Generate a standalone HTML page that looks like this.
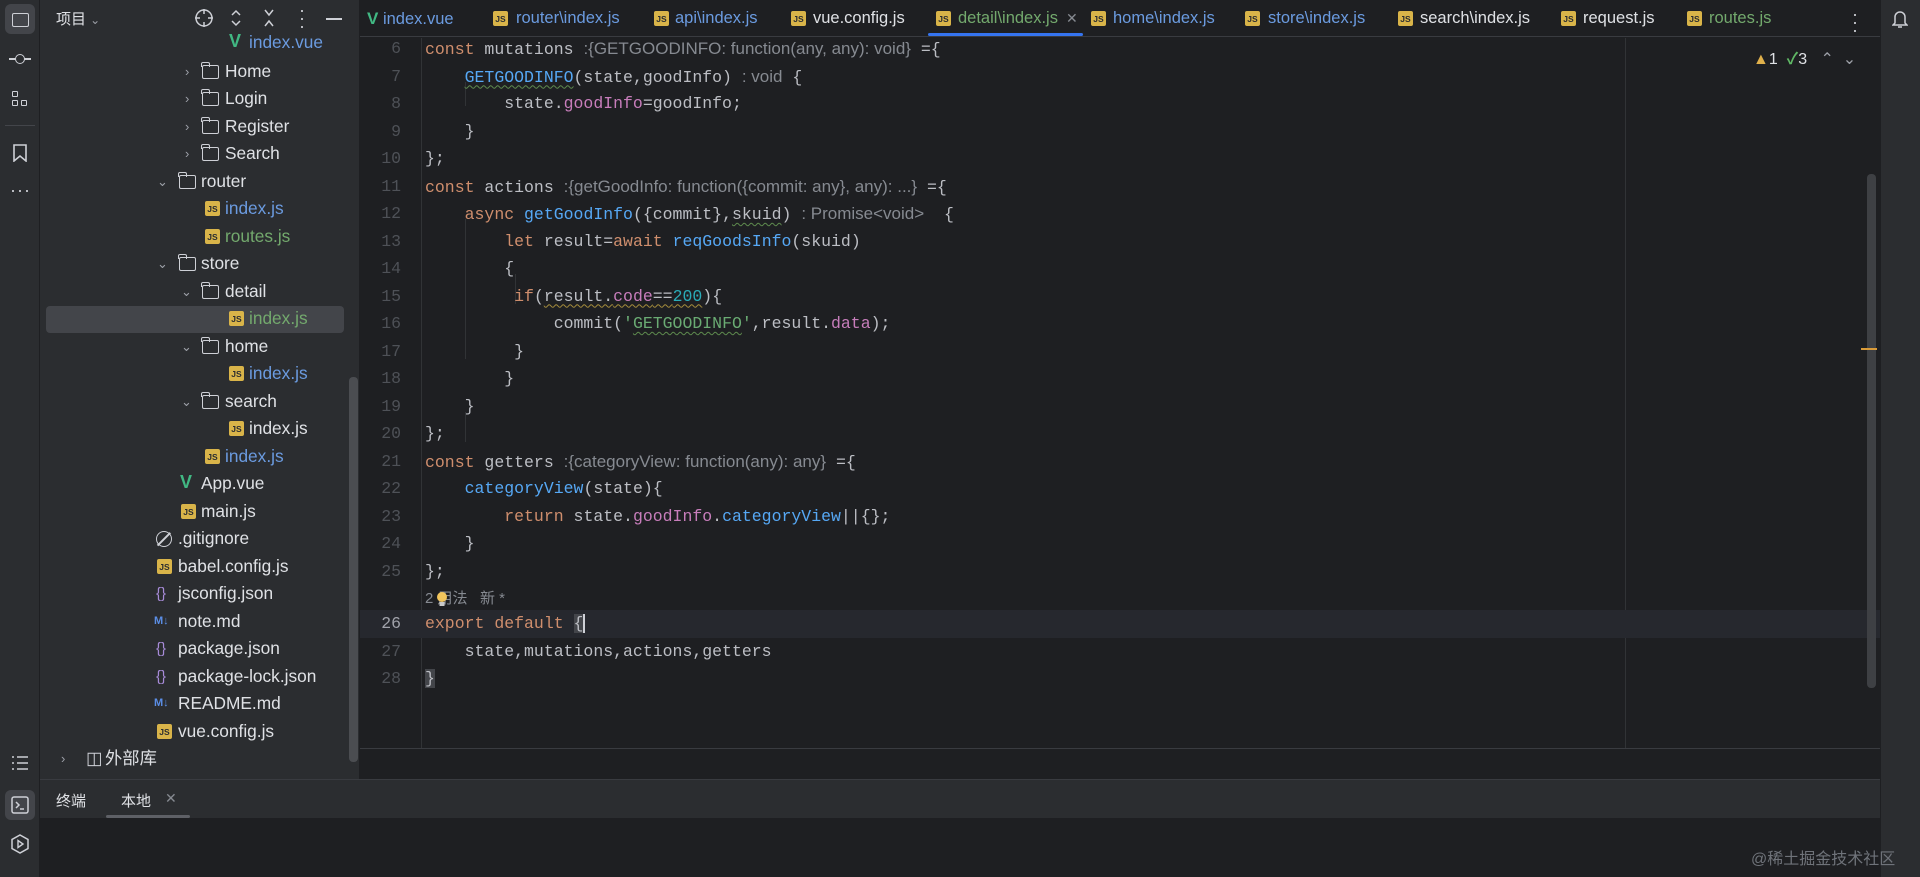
<!DOCTYPE html>
<html><head><meta charset="utf-8">
<style>
*{margin:0;padding:0;box-sizing:border-box}
body{width:1920px;height:877px;overflow:hidden;background:#1e1f22;font-family:"Liberation Sans","Noto Sans CJK SC",sans-serif;color:#dfe1e5;position:relative}
.abs{position:absolute}
#act{left:0;top:0;width:40px;height:877px;background:#2b2d30;border-right:1px solid #1e1f22}
#proj{left:40px;top:0;width:320px;height:779px;background:#2b2d30;border-right:1px solid #1e1f22;overflow:hidden}
.row{position:absolute;height:27px;line-height:27px;font-size:17.3px;white-space:nowrap}
.chev{position:absolute;font-size:13px;color:#9da0a8}
.js{position:absolute;width:15px;height:15px;background:#d9b449;border-radius:2px;color:#2b2d30;font-size:8.5px;font-weight:bold;line-height:17px;text-align:center;font-family:"Liberation Sans",sans-serif}
.fold{position:absolute;width:17px;height:14px;border:1.6px solid #ced0d6;border-radius:2px}
.fold:before{content:"";position:absolute;left:-1.6px;top:-4px;width:7px;height:4px;border:1.6px solid #ced0d6;border-bottom:none;border-radius:2px 2px 0 0}
.vue{position:absolute;color:#41b883;font-weight:bold;font-size:18px}
.blue{color:#6b9be0}.green{color:#73a96d}
#tabs{left:360px;top:0;width:1520px;height:37px;background:#1e1f22;border-bottom:1px solid #393b40}
.tab{position:absolute;top:0;height:37px;line-height:37px;font-size:16.5px;white-space:nowrap}
#code{left:360px;top:38px;width:1520px;height:710px;overflow:hidden;background:#1e1f22}
.ln{position:absolute;left:0;width:1520px;height:27.5px;line-height:27.5px;font-family:"Liberation Mono",monospace;font-size:16.5px;color:#bcbec4;white-space:pre}
.num{position:absolute;left:0;width:41px;text-align:right;color:#4e5157}
.txt{position:absolute;left:65px}
.k{color:#cf8e6d}.f{color:#56a8f5}.p{color:#c77dbb}.n{color:#2aacb8}.s{color:#6aab73}
.h{font-family:"Liberation Sans","Noto Sans CJK SC",sans-serif;font-size:17px;color:#868a91}
.w{text-decoration:underline wavy #5e8b4e;text-decoration-thickness:1px;text-underline-offset:3px}
.wy{text-decoration:underline wavy #a58d3c;text-decoration-thickness:1px;text-underline-offset:3px}
.g{position:absolute;width:1px;background:#313336}
</style></head><body>

<div id="act" class="abs">
  <div class="abs" style="left:5px;top:4px;width:30px;height:30px;background:#43454a;border-radius:6px"></div>
  <div class="abs" style="left:12px;top:13px;width:17px;height:14px;border:1.6px solid #ced0d6;border-radius:2px"></div>
  <div class="abs" style="left:9px;top:58px;width:22px;height:1.5px;background:#ced0d6"></div>
  <div class="abs" style="left:15px;top:54px;width:10px;height:10px;border:1.6px solid #ced0d6;border-radius:50%;background:#2b2d30"></div>
  <div class="abs" style="left:12px;top:91px;width:6px;height:6px;border:1.5px solid #ced0d6;border-radius:1px"></div>
  <div class="abs" style="left:12px;top:100px;width:6px;height:6px;border:1.5px solid #ced0d6;border-radius:1px"></div>
  <div class="abs" style="left:21px;top:100px;width:6px;height:6px;border:1.5px solid #ced0d6;border-radius:1px"></div>
  <div class="abs" style="left:5px;top:125px;width:30px;height:1px;background:#43454a"></div>
  <svg class="abs" style="left:12px;top:144px" width="16" height="18"><path d="M2 1h12v16l-6-5-6 5z" fill="none" stroke="#ced0d6" stroke-width="1.6"/></svg>
  <div class="abs" style="left:10px;top:180px;font-size:18px;color:#ced0d6;letter-spacing:1px">···</div>
  <svg class="abs" style="left:11px;top:755px" width="18" height="16"><path d="M1 2h2M6 2h11M1 8h2M6 8h11M1 14h2M6 14h11" stroke="#ced0d6" stroke-width="1.6"/></svg>
  <div class="abs" style="left:5px;top:790px;width:30px;height:30px;background:#43454a;border-radius:6px"></div>
  <svg class="abs" style="left:11px;top:796px" width="18" height="18"><rect x="1" y="1" width="16" height="16" rx="2" fill="none" stroke="#ced0d6" stroke-width="1.5"/><path d="M5 6l3 3-3 3M9 13h4" fill="none" stroke="#ced0d6" stroke-width="1.5"/></svg>
  <svg class="abs" style="left:10px;top:834px" width="20" height="20"><path d="M10 1l8 4.5v9L10 19l-8-4.5v-9z" fill="none" stroke="#ced0d6" stroke-width="1.5"/><path d="M8 6.5v7l5-3.5z" fill="none" stroke="#ced0d6" stroke-width="1.4"/></svg>
</div>

<div id="proj" class="abs">
  <div class="abs" style="left:16px;top:8px;font-size:15px;color:#dfe1e5">项目 <span style="font-size:12px;color:#9da0a8">&#8964;</span></div>
  <svg class="abs" style="left:154px;top:8px" width="20" height="20"><circle cx="10" cy="10" r="8" fill="none" stroke="#ced0d6" stroke-width="1.5"/><path d="M10 1v5M10 14v5M1 10h5M14 10h5" stroke="#ced0d6" stroke-width="1.5"/></svg>
  <svg class="abs" style="left:190px;top:8px" width="12" height="20"><path d="M2 7l4-4 4 4M2 13l4 4 4-4" fill="none" stroke="#ced0d6" stroke-width="1.5"/></svg>
  <svg class="abs" style="left:223px;top:8px" width="12" height="20"><path d="M2 2l4 5 4-5M2 18l4-5 4 5" fill="none" stroke="#ced0d6" stroke-width="1.5"/></svg>
  <div class="abs" style="left:259px;top:6px;font-size:18px;line-height:8px;color:#ced0d6">·<br>·<br>·</div>
  <div class="abs" style="left:286px;top:18px;width:16px;height:1.6px;background:#ced0d6"></div>

  <div class="abs" style="left:6px;top:306px;width:298px;height:27px;background:#43454a;border-radius:4px"></div>
  <div class="abs" style="left:309px;top:377px;width:9px;height:385px;background:#4b4d51;border-radius:4px"></div>

  <div class="row" style="top:29px;left:0;width:300px"><span class="vue" style="left:189px;top:-1px">V</span><span class="abs blue" style="left:209px">index.vue</span></div>
  <div class="row" style="top:58px;left:0;width:300px"><span class="chev" style="left:145px">&#8250;</span><span class="fold" style="left:162px;top:7px"></span><span class="abs" style="left:185px">Home</span></div>
  <div class="row" style="top:85px;left:0;width:300px"><span class="chev" style="left:145px">&#8250;</span><span class="fold" style="left:162px;top:7px"></span><span class="abs" style="left:185px">Login</span></div>
  <div class="row" style="top:113px;left:0;width:300px"><span class="chev" style="left:145px">&#8250;</span><span class="fold" style="left:162px;top:7px"></span><span class="abs" style="left:185px">Register</span></div>
  <div class="row" style="top:140px;left:0;width:300px"><span class="chev" style="left:145px">&#8250;</span><span class="fold" style="left:162px;top:7px"></span><span class="abs" style="left:185px">Search</span></div>
  <div class="row" style="top:168px;left:0;width:300px"><span class="chev" style="left:117px">&#8964;</span><span class="fold" style="left:139px;top:7px"></span><span class="abs" style="left:161px">router</span></div>
  <div class="row" style="top:195px;left:0;width:300px"><span class="js" style="left:165px;top:6px">JS</span><span class="abs blue" style="left:185px">index.js</span></div>
  <div class="row" style="top:223px;left:0;width:300px"><span class="js" style="left:165px;top:6px">JS</span><span class="abs green" style="left:185px">routes.js</span></div>
  <div class="row" style="top:250px;left:0;width:300px"><span class="chev" style="left:117px">&#8964;</span><span class="fold" style="left:139px;top:7px"></span><span class="abs" style="left:161px">store</span></div>
  <div class="row" style="top:278px;left:0;width:300px"><span class="chev" style="left:141px">&#8964;</span><span class="fold" style="left:162px;top:7px"></span><span class="abs" style="left:185px">detail</span></div>
  <div class="row" style="top:305px;left:0;width:300px"><span class="js" style="left:189px;top:6px">JS</span><span class="abs green" style="left:209px">index.js</span></div>
  <div class="row" style="top:333px;left:0;width:300px"><span class="chev" style="left:141px">&#8964;</span><span class="fold" style="left:162px;top:7px"></span><span class="abs" style="left:185px">home</span></div>
  <div class="row" style="top:360px;left:0;width:300px"><span class="js" style="left:189px;top:6px">JS</span><span class="abs blue" style="left:209px">index.js</span></div>
  <div class="row" style="top:388px;left:0;width:300px"><span class="chev" style="left:141px">&#8964;</span><span class="fold" style="left:162px;top:7px"></span><span class="abs" style="left:185px">search</span></div>
  <div class="row" style="top:415px;left:0;width:300px"><span class="js" style="left:189px;top:6px">JS</span><span class="abs" style="left:209px">index.js</span></div>
  <div class="row" style="top:443px;left:0;width:300px"><span class="js" style="left:165px;top:6px">JS</span><span class="abs blue" style="left:185px">index.js</span></div>
  <div class="row" style="top:470px;left:0;width:300px"><span class="vue" style="left:140px;top:-1px">V</span><span class="abs" style="left:161px">App.vue</span></div>
  <div class="row" style="top:498px;left:0;width:300px"><span class="js" style="left:141px;top:6px">JS</span><span class="abs" style="left:161px">main.js</span></div>
  <div class="row" style="top:525px;left:0;width:300px"><span class="abs" style="left:116px;top:6px;width:16px;height:16px;border:1.5px solid #ced0d6;border-radius:50%"></span><span class="abs" style="left:123px;top:5px;width:1.5px;height:18px;background:#ced0d6;transform:rotate(45deg)"></span><span class="abs" style="left:138px">.gitignore</span></div>
  <div class="row" style="top:553px;left:0;width:300px"><span class="js" style="left:117px;top:6px">JS</span><span class="abs" style="left:138px">babel.config.js</span></div>
  <div class="row" style="top:580px;left:0;width:300px"><span class="abs" style="left:116px;color:#a78bd8;font-size:15px">{}</span><span class="abs" style="left:138px">jsconfig.json</span></div>
  <div class="row" style="top:608px;left:0;width:300px"><span class="abs" style="left:114px;color:#5b8ee6;font-size:11px;font-weight:bold">M&#8595;</span><span class="abs" style="left:138px">note.md</span></div>
  <div class="row" style="top:635px;left:0;width:300px"><span class="abs" style="left:116px;color:#a78bd8;font-size:15px">{}</span><span class="abs" style="left:138px">package.json</span></div>
  <div class="row" style="top:663px;left:0;width:300px"><span class="abs" style="left:116px;color:#a78bd8;font-size:15px">{}</span><span class="abs" style="left:138px">package-lock.json</span></div>
  <div class="row" style="top:690px;left:0;width:300px"><span class="abs" style="left:114px;color:#5b8ee6;font-size:11px;font-weight:bold">M&#8595;</span><span class="abs" style="left:138px">README.md</span></div>
  <div class="row" style="top:718px;left:0;width:300px"><span class="js" style="left:117px;top:6px">JS</span><span class="abs" style="left:138px">vue.config.js</span></div>
  <div class="row" style="top:745px;left:0;width:300px"><span class="chev" style="left:21px">&#8250;</span><span class="abs" style="left:46px;color:#ced0d6">&#9707;</span><span class="abs" style="left:65px">外部库</span></div>
</div>

<div id="tabs" class="abs">
  <span class="tab" style="left:7px"><b style="color:#41b883;font-size:17px">V</b> <span class="blue">index.vue</span></span>
  <span class="js" style="left:133px;top:11px">JS</span><span class="tab blue" style="left:156px">router\index.js</span>
  <span class="js" style="left:294px;top:11px">JS</span><span class="tab blue" style="left:315px">api\index.js</span>
  <span class="js" style="left:431px;top:11px">JS</span><span class="tab" style="left:453px">vue.config.js</span>
  <span class="js" style="left:576px;top:11px">JS</span><span class="tab green" style="left:598px">detail\index.js</span><span class="tab" style="left:706px;color:#868a91;font-size:14px">✕</span>
  <div class="abs" style="left:568px;top:33px;width:155px;height:3px;background:#3574f0;border-radius:2px"></div>
  <span class="js" style="left:731px;top:11px">JS</span><span class="tab blue" style="left:753px">home\index.js</span>
  <span class="js" style="left:885px;top:11px">JS</span><span class="tab blue" style="left:908px">store\index.js</span>
  <span class="js" style="left:1038px;top:11px">JS</span><span class="tab" style="left:1060px">search\index.js</span>
  <span class="js" style="left:1201px;top:11px">JS</span><span class="tab" style="left:1223px">request.js</span>
  <span class="js" style="left:1327px;top:11px">JS</span><span class="tab green" style="left:1349px">routes.js</span>
  <div class="abs" style="left:1492px;top:10px;font-size:18px;line-height:8px;color:#ced0d6">·<br>·<br>·</div>
</div>

<div class="abs" style="left:1880px;top:0;width:40px;height:877px;background:#2b2d30;border-left:1px solid #1e1f22"></div>
<svg class="abs" style="left:1892px;top:9px" width="16" height="20"><path d="M3 14V8a5 5 0 0 1 10 0v6l2 2H1z M6 18h4" fill="none" stroke="#ced0d6" stroke-width="1.5"/></svg>

<div id="code" class="abs">
  <div class="abs" style="left:61px;top:0;width:1px;height:710px;background:#313336"></div>
  <div class="abs" style="left:1265px;top:0;width:1px;height:710px;background:#313336"></div>
  <div class="abs" style="left:0;top:572px;width:1520px;height:27.5px;background:#26282e"></div>
  <div class="g" style="left:105px;top:44px;height:24px"></div>
  <div class="g" style="left:105px;top:181px;height:140px"></div>
  <div class="g" style="left:155px;top:236px;height:30px"></div>
  <div class="g" style="left:105px;top:374px;height:30px"></div>

  <div class="ln" style="top:-3px"><span class="num">6</span><span class="txt"><span class="k">const</span> mutations <span class="h">:{GETGOODINFO: function(any, any): void}</span> ={</span></div>
  <div class="ln" style="top:24.5px"><span class="num">7</span><span class="txt">    <span class="f w">GETGOODINFO</span>(state,goodInfo) <span class="h">: void</span> {</span></div>
  <div class="ln" style="top:52px"><span class="num">8</span><span class="txt">        state.<span class="p">goodInfo</span>=goodInfo;</span></div>
  <div class="ln" style="top:79.5px"><span class="num">9</span><span class="txt">    }</span></div>
  <div class="ln" style="top:107px"><span class="num">10</span><span class="txt">};</span></div>
  <div class="ln" style="top:134.5px"><span class="num">11</span><span class="txt"><span class="k">const</span> actions <span class="h">:{getGoodInfo: function({commit: any}, any): ...}</span> ={</span></div>
  <div class="ln" style="top:162px"><span class="num">12</span><span class="txt">    <span class="k">async</span> <span class="f">getGoodInfo</span>({commit},<span class="w">skuid</span>) <span class="h">: Promise&lt;void&gt;</span>  {</span></div>
  <div class="ln" style="top:189.5px"><span class="num">13</span><span class="txt">        <span class="k">let</span> result=<span class="k">await</span> <span class="f">reqGoodsInfo</span>(skuid)</span></div>
  <div class="ln" style="top:217px"><span class="num">14</span><span class="txt">        {</span></div>
  <div class="ln" style="top:244.5px"><span class="num">15</span><span class="txt">         <span class="k">if</span>(<span class="wy">result.<span class="p">code</span>==<span class="n">200</span></span>){</span></div>
  <div class="ln" style="top:272px"><span class="num">16</span><span class="txt">             commit(<span class="s">'<span class="w">GETGOODINFO</span>'</span>,result.<span class="p">data</span>);</span></div>
  <div class="ln" style="top:299.5px"><span class="num">17</span><span class="txt">         }</span></div>
  <div class="ln" style="top:327px"><span class="num">18</span><span class="txt">        }</span></div>
  <div class="ln" style="top:354.5px"><span class="num">19</span><span class="txt">    }</span></div>
  <div class="ln" style="top:382px"><span class="num">20</span><span class="txt">};</span></div>
  <div class="ln" style="top:409.5px"><span class="num">21</span><span class="txt"><span class="k">const</span> getters <span class="h">:{categoryView: function(any): any}</span> ={</span></div>
  <div class="ln" style="top:437px"><span class="num">22</span><span class="txt">    <span class="f">categoryView</span>(state){</span></div>
  <div class="ln" style="top:464.5px"><span class="num">23</span><span class="txt">        <span class="k">return</span> state.<span class="p">goodInfo</span>.<span class="f">categoryView</span>||{};</span></div>
  <div class="ln" style="top:492px"><span class="num">24</span><span class="txt">    }</span></div>
  <div class="ln" style="top:519.5px"><span class="num">25</span><span class="txt">};</span></div>
  <div class="ln" style="top:547px"><span class="txt h" style="font-size:15px">2 用法   新 *</span></div>
  <svg class="abs" style="left:76px;top:553px" width="12" height="18"><circle cx="6" cy="6" r="5" fill="#f2c55c"/><rect x="3.5" y="11" width="5" height="4" fill="#c9c9c9"/></svg>
  <div class="ln" style="top:572px"><span class="num" style="color:#a1a3ab">26</span><span class="txt"><span class="k">export</span> <span class="k">default</span> <span style="background:#43454a">{</span><span style="border-left:2px solid #ced0d6"></span></span></div>
  <div class="ln" style="top:599.5px"><span class="num">27</span><span class="txt">    state,mutations,actions,getters</span></div>
  <div class="ln" style="top:627px"><span class="num">28</span><span class="txt"><span style="background:#43454a">}</span></span></div>

  <div class="abs" style="left:1393px;top:7px;font-size:16px;color:#dfe1e5;white-space:nowrap"><span style="color:#e0b04b">&#9650;</span>1 &nbsp;<span style="color:#5fb865;font-weight:bold">&#10003;</span>3 &nbsp; <span style="color:#9da0a8">&#8963; &nbsp;&#8964;</span></div>
  <div class="abs" style="left:1507px;top:136px;width:9px;height:514px;background:#3e4044;border-radius:4px"></div>
  <div class="abs" style="left:1501px;top:310px;width:16px;height:2px;background:#d99b39"></div>
</div>
<div class="abs" style="left:360px;top:748px;width:1520px;height:1px;background:#393b40"></div>

<div class="abs" style="left:40px;top:779px;width:1840px;height:98px;background:#1e1f22;border-top:1px solid #393b40"></div>
<div class="abs" style="left:40px;top:780px;width:1840px;height:38px;background:#2b2d30"></div>
<div class="abs" style="left:56px;top:790px;font-size:15px;color:#dfe1e5">终端</div>
<div class="abs" style="left:121px;top:790px;font-size:15px;color:#dfe1e5">本地</div>
<div class="abs" style="left:165px;top:790px;font-size:14px;color:#868a91">✕</div>
<div class="abs" style="left:106px;top:815px;width:84px;height:3px;background:#5e6066;border-radius:2px"></div>
<div class="abs" style="left:1751px;top:845px;font-size:16px;color:#6f737a">@稀土掘金技术社区</div>
</body></html>
